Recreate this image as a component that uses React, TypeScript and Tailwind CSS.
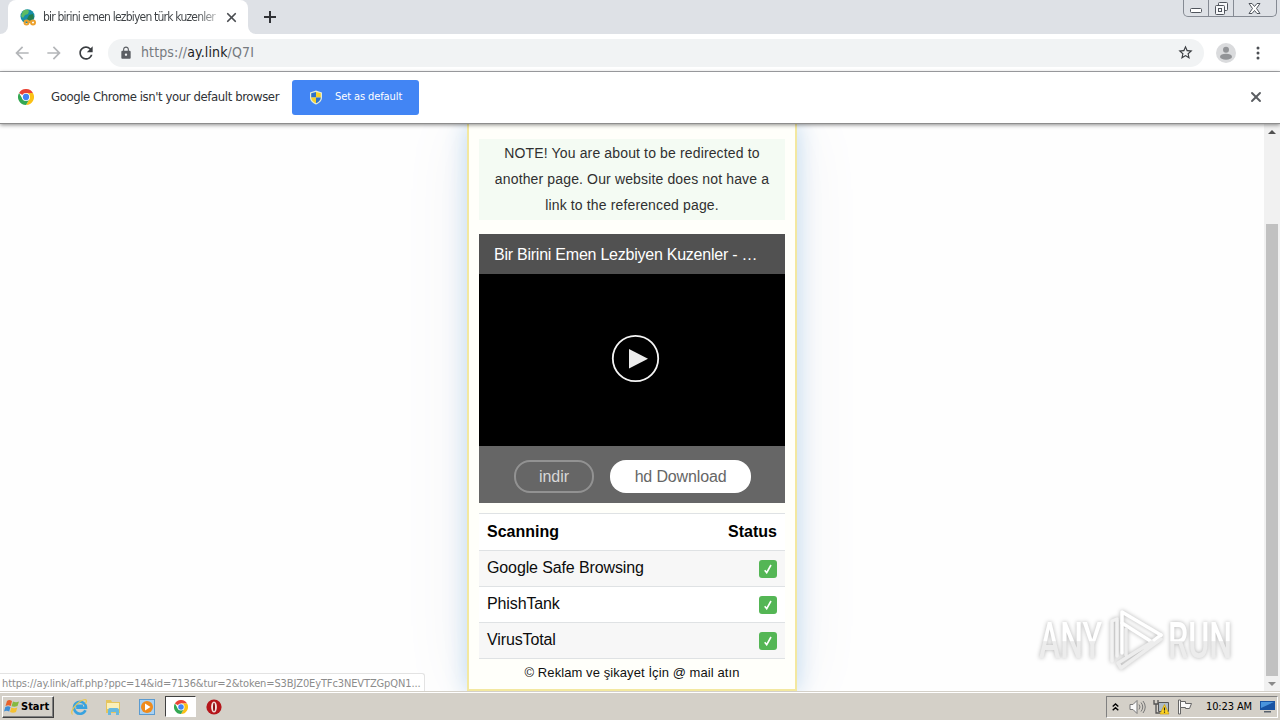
import React from 'react'
import { FiX } from 'react-icons/fi'
import { MdLock, MdRefresh, MdStarBorder, MdArrowBack, MdArrowForward } from 'react-icons/md'

const ChromeLogo: React.FC<{ size: number }> = ({ size }) => (
  <svg width={size} height={size} viewBox="0 0 24 24">
    <circle cx="12" cy="12" r="12" fill="#fff" />
    <path d="M12 12 1.600 6A12 12 0 0 1 22.400 6H12Z" fill="#ea4335" />
    <path d="M12 6h10.400A12 12 0 0 1 12 24l5.200-9Z" fill="#fbc116" />
    <path d="M6.800 15 1.600 6A12 12 0 0 0 12 24l5.200-9Z" fill="#34a853" />
    <circle cx="12" cy="12" r="6" fill="#fff" />
    <circle cx="12" cy="12" r="4.700" fill="#4285f4" />
  </svg>
)

const TabStrip = () => (
  <div className="flex h-[34px] items-start bg-[#dee1e6]">
    <div className="flex h-full w-2 items-end bg-white">
      <div className="h-full w-2 rounded-br-lg bg-[#dee1e6]" />
    </div>
    <div className="flex h-full w-[240px] items-center rounded-t-lg bg-white pl-3">
      <svg width="16" height="17" viewBox="0 0 16 17" className="shrink-0">
        <circle cx="7.500" cy="7.200" r="7" fill="#168ea8" />
        <path d="M3 2c3-2 5-1 6 0L8 5 5 6 3 9 1 7Z" fill="#5dbb63" />
        <path d="m9 6 4-1 1 4-4 3-3-2Z" fill="#247d4c" />
        <g fill="none" stroke="#eda12d" strokeWidth="2">
          <circle cx="6.500" cy="13.500" r="2" />
          <circle cx="13" cy="13.500" r="2" />
          <path d="M8 12.600h4" />
        </g>
      </svg>
      <span className="ml-[7px] w-[174px] bg-gradient-to-r from-[#3c4043] from-88% to-[#3c404350] bg-clip-text text-[12px] tracking-[-0.79px] whitespace-nowrap text-transparent">
        bir birini emen lezbiyen türk kuzenler
      </span>
      <FiX className="ml-[7px] h-[15px] w-[15px] text-[#4a4d51]" strokeWidth={2.8} />
    </div>
    <div className="flex h-full w-2 bg-white">
      <div className="h-full w-2 rounded-bl-lg bg-[#dee1e6]" />
    </div>
    <svg width="12" height="12" viewBox="0 0 12 12" className="mt-[11px] ml-2" stroke="#303236" strokeWidth="2">
      <path d="M6 0v12M0 6h12" />
    </svg>
    <div className="mr-[3px] ml-auto flex h-[17px] w-[94px] rounded-b-[5px] border border-t-0 border-[#858a93] text-[#50555d]">
      <div className="flex w-[25px] items-center justify-center border-r border-[#858a93]">
        <svg width="12" height="5" viewBox="0 0 12 5" className="mt-1">
          <rect x=".5" y=".5" width="11" height="4" rx="1" fill="#fff" stroke="currentColor" />
        </svg>
      </div>
      <div className="flex w-[25px] items-center justify-center border-r border-[#858a93]">
        <svg width="13" height="13" viewBox="0 0 13 13" fill="#f7f8fa" stroke="currentColor">
          <rect x="3.500" y=".5" width="9" height="8" rx="1" />
          <rect x=".5" y="3.500" width="9" height="9" rx="1" />
          <rect x="3.500" y="6.500" width="3" height="3" />
        </svg>
      </div>
      <div className="flex flex-1 items-center justify-center pr-[2px]">
        <svg width="13" height="11" viewBox="0 0 13 11" fill="#fff" stroke="currentColor">
          <path d="M1 .5h3l2.500 3 2.500-3h3L8.500 5.500l3.500 5H9l-2.500-3-2.500 3H1l3.500-5Z" />
        </svg>
      </div>
    </div>
  </div>
)

const Toolbar = () => (
  <div className="flex h-[38px] items-center border-b border-[#a9abae] bg-white pl-[12px]">
    <MdArrowBack className="h-5 w-5 text-[#b4b6b9]" />
    <MdArrowForward className="ml-[12px] h-5 w-5 text-[#b4b6b9]" />
    <MdRefresh className="ml-[12px] h-5 w-5 text-[#3a3d41]" />
    <div className="ml-[12px] flex h-7 w-[1096px] items-center rounded-full bg-[#f1f3f4] pr-[10px] pl-[11px]">
      <MdLock className="h-[14px] w-[14px] text-[#5b5e63]" />
      <span className="ml-2 text-[14px] tracking-[0.13px] text-[#767a7f]">
        https://<span className="text-[#202124]">ay.link</span>/Q7I
      </span>
      <MdStarBorder className="ml-auto h-[17px] w-[17px] text-[#3a3d41]" />
    </div>
    <svg width="20" height="20" viewBox="0 0 20 20" className="ml-[12px]">
      <circle cx="10" cy="10" r="10" fill="#dadbdd" />
      <circle cx="10" cy="6.700" r="3" fill="#929497" />
      <ellipse cx="10" cy="13.700" rx="6" ry="3" fill="#929497" />
    </svg>
    <svg width="4" height="14" viewBox="0 0 4 14" className="ml-[20px]" fill="#4c4f54">
      <circle cx="2" cy="2" r="1.500" />
      <circle cx="2" cy="7" r="1.500" />
      <circle cx="2" cy="12" r="1.500" />
    </svg>
  </div>
)

const DefaultBrowserBar = () => (
  <div className="relative z-10 flex h-[52px] items-center border-b border-[#8d8d8d] bg-white pb-px pl-[18px] shadow-[0_1px_4px_rgba(0,0,0,0.45)]">
    <ChromeLogo size={16} />
    <span className="-mt-px ml-[17px] w-[241px] text-[13px] tracking-[-0.41px] whitespace-nowrap text-[#303236]">
      Google Chrome isn't your default browser
    </span>
    <button className="mt-px flex h-[35px] w-[127px] items-center rounded-[3px] bg-[#4285f4] pl-[17px] text-[11px] tracking-[-0.1px] whitespace-nowrap text-white">
      <svg width="14" height="15" viewBox="0 0 14 15" className="mr-3">
        <path d="M7 .5 13 2.500v5c0 3.500-2.500 5.500-6 7-3.500-1.500-6-3.500-6-7v-5Z" fill="#e4ecd8" />
        <path d="M7 2v5.500H2.200V3.300Z" fill="#2e71c9" />
        <path d="M7 2v5.500h4.800V3.300Z" fill="#f6d22c" />
        <path d="M7 7.500H2.200C2.200 10 4 12 7 13.300Z" fill="#f6d22c" />
        <path d="M7 7.500h4.800c0 2.500-1.800 4.500-4.800 5.800Z" fill="#2e71c9" />
      </svg>
      Set as default
    </button>
    <FiX className="mr-4 ml-auto h-4 w-4 text-[#5a5d61]" strokeWidth={2.8} />
  </div>
)

const scans = ['Google Safe Browsing', 'PhishTank', 'VirusTotal']

const LinkCard = () => (
  <div className="flex h-[567px] w-[330px] flex-col border-x-2 border-b-2 border-[#f3e8a0] bg-[#fffffa] px-[10px] font-['Liberation_Sans',Arial,sans-serif] shadow-[0_0_22px_#bfdaf0,0_0_70px_#f0f0f4]">
    <div className="mt-[15px] h-[81px] bg-[#f4fbf3] px-3 pt-px text-center text-[14px] leading-[26px] tracking-[0.14px] whitespace-nowrap text-[#303030]">
      <p>NOTE! You are about to be redirected to</p>
      <p>another page. Our website does not have a</p>
      <p>link to the referenced page.</p>
    </div>
    <div className="mt-[14px] flex h-10 items-center bg-[#515151] px-[15px] pt-[2px] text-[16px] tracking-[-0.24px] whitespace-nowrap text-white">
      Bir Birini Emen Lezbiyen Kuzenler - …
    </div>
    <div className="flex h-[172px] justify-center bg-black pt-[60px] pl-[7px]">
      <svg width="49" height="49" viewBox="0 0 49 49">
        <circle cx="24.500" cy="24.500" r="22.700" fill="none" stroke="#f4f4f4" strokeWidth="1.800" />
        <path d="M18 15v19.500l19-9.700Z" fill="#ececec" />
      </svg>
    </div>
    <div className="flex h-[57px] items-start justify-center gap-4 bg-[#666] pt-[14px] pl-px text-[16px]">
      <button className="h-[33px] w-20 rounded-2xl border-2 border-[#929292] text-[#d8d8d8]">indir</button>
      <button className="h-[33px] w-[141px] rounded-2xl bg-white tracking-[-0.15px] text-[#666]">hd Download</button>
    </div>
    <div className="mt-[10px] border-y border-[#dfe2e4] text-[16px] tracking-[-0.12px] text-[#0c0c0c]">
      <div className="flex h-9 items-center justify-between bg-white px-2 font-bold tracking-normal text-black">
        <span>Scanning</span>
        <span>Status</span>
      </div>
      {scans.map((name) => (
        <div key={name} className="flex h-9 items-center justify-between border-t border-[#dfe2e4] px-2 odd:bg-white even:bg-[#f7f7f7]">
          <span className="-mt-[2px]">{name}</span>
          <span className="flex h-[18px] w-[18px] items-center justify-center rounded-[3px] bg-[#54b655]">
            <svg width="8" height="10" viewBox="0 0 8 10" fill="none" stroke="#fff" strokeWidth="1.600">
              <path d="M.7 6.200 2.700 8.700 7 1" />
            </svg>
          </span>
        </div>
      ))}
    </div>
    <p className="mt-[4px] text-center text-[13px] leading-5 tracking-[0.08px] text-[#111]">© Reklam ve şikayet İçin @ mail atın</p>
  </div>
)

const Watermark = () => (
  <svg width="204" height="66" viewBox="0 0 204 66" className="absolute top-[483px] left-[1036px] drop-shadow-[0_0_2px_#b4b4b4]">
    <defs>
      <linearGradient id="wm" x1="0" y1="0" x2="0" y2="1">
        <stop offset="50%" stopColor="#fff" />
        <stop offset="51%" stopColor="#ececec" />
      </linearGradient>
    </defs>
    <g fill="url(#wm)" fontFamily="Roboto, sans-serif" fontWeight="500" fontSize="50">
      <text x="3" y="51" textLength="63" lengthAdjust="spacingAndGlyphs">ANY</text>
      <text x="132" y="51" textLength="64" lengthAdjust="spacingAndGlyphs">RUN</text>
    </g>
    <g fill="none" strokeWidth="3.500" strokeLinejoin="round" strokeLinecap="round">
      <path d="M76 54V14l5-2M81 49V13" stroke="#f2f2f2" />
      <path d="M86 46V5l39 23" stroke="#fff" />
      <path d="M86 16l30 19 9-7" stroke="#fff" />
      <path d="M125 32 85 61l-3-5 34-21M90 48V22" stroke="#ededed" />
    </g>
  </svg>
)

const ScrollBar = () => (
  <div className="flex w-4 flex-col items-center bg-[#f1f1f1]">
    <svg width="8" height="4" viewBox="0 0 8 4" className="mt-[6px]" fill="#505050">
      <path d="M4 0l4 4H0Z" />
    </svg>
    <div className="mt-[90px] h-[452px] w-3 bg-[#c1c1c1]" />
    <svg width="8" height="4" viewBox="0 0 8 4" className="mt-[6px]" fill="#8a8a8a">
      <path d="M0 0h8L4 4Z" />
    </svg>
  </div>
)

const Taskbar = () => (
  <div className="flex h-[29px] items-center border-t border-[#d4d0c8] bg-[#d4d0c8] pt-px shadow-[inset_0_1px_0_#fff]">
    <button className="ml-[2px] flex h-[22px] w-[52px] shrink-0 items-center border border-t-white border-r-[#404040] border-b-[#404040] border-l-white pl-px text-[11px] font-bold text-black shadow-[inset_-1px_-1px_0_#808080]">
      <svg width="16" height="15" viewBox="0 0 16 15" className="shrink-0">
        <path d="M3 2c2-1.500 3-1 5 0L6.800 7C5 6 3.500 6 1.500 7Z" fill="#e8622c" />
        <path d="M9 2.500c2 1 4 1 6 0L13.500 7c-2 1-4 1-6 .3Z" fill="#86b940" />
        <path d="M1.300 8c2-1 3.500-1 5.200 0L5.200 12.500c-2-1-3.500-1-5.200 0Z" fill="#3f8ed6" />
        <path d="M7.300 8.500c2 1 4 1 6 0L12 13c-2 1-4 1-6 0Z" fill="#f5c132" />
      </svg>
      <span className="mt-px ml-px">Start</span>
    </button>
    <svg width="18" height="18" viewBox="0 0 18 18" className="ml-[16px]" fill="none">
      <path
        d="M15.500 12.200A6 6 0 1 1 16 9.700H6.200M6 7.700h7"
        stroke="#38a2df"
        strokeWidth="2.600"
      />
      <path d="M2.500 16.500C-1 14 7 4 13 2c4-1.500 4 1 2.500 3.500" stroke="#e8c751" strokeWidth="1.300" />
    </svg>
    <svg width="18" height="18" viewBox="0 0 18 18" className="ml-[16px]">
      <path d="M2 2h5l1 2h8v11H2Z" fill="#e6c55d" />
      <path d="M3 5h12v6H3Z" fill="#fbefb8" />
      <path d="M4 17v-4q0-3 2-3h7q2 0 2 3v4h-3v-3H7v3Z" fill="#67b9df" />
    </svg>
    <svg width="16" height="16" viewBox="0 0 16 16" className="ml-[17px]">
      <rect x=".5" y=".5" width="15" height="15" fill="#a8d1f3" stroke="#5b9bd0" />
      <circle cx="8" cy="8" r="6" fill="#ef8b1c" />
      <path d="M6 4.500v7L11.500 8Z" fill="#fff" />
    </svg>
    <div className="ml-[10px] flex h-[21px] w-[31px] items-center justify-center border border-t-[#404040] border-r-white border-b-white border-l-[#404040] bg-white">
      <ChromeLogo size={14} />
    </div>
    <svg width="16" height="16" viewBox="0 0 16 16" className="ml-[10px]">
      <circle cx="8" cy="8" r="7.600" fill="#b5161b" />
      <ellipse cx="8" cy="8" rx="2.900" ry="5.500" fill="#f4e6e3" />
      <ellipse cx="8" cy="8" rx="1" ry="4.300" fill="#8a0d12" />
    </svg>
    <div className="mr-[2px] ml-auto flex h-[22px] w-[172px] items-center border border-t-[#808080] border-r-white border-b-white border-l-[#808080] text-[11px] text-black">
      <svg width="7" height="8" viewBox="0 0 7 8" className="ml-[5px]" fill="none" stroke="#000" strokeWidth="1.400">
        <path d="M.7 3.500 3.500 1l2.800 2.500M.7 7.300l2.800-2.500 2.800 2.500" />
      </svg>
      <svg width="17" height="16" viewBox="0 0 17 16" className="ml-[10px]" stroke="#777" fill="none">
        <path d="M1 5.500h3L8 1.500v13l-4-4H1Z" fill="#f9f9f9" />
        <path d="M10 5.500q2 2.500 0 5M12 3.500q3.500 4.500 0 9M14 2q4.500 6 0 12" />
      </svg>
      <svg width="17" height="16" viewBox="0 0 17 16" className="ml-[7px]">
        <path d="M5.500 3.500h10v9h-10Z" fill="#aebbc5" stroke="#555" />
        <path d="M1 1v4h4V1M3 5v9h4" fill="none" stroke="#555" strokeWidth="1.300" />
        <path d="m11.500 5.500 4.500 9.500H7Z" fill="#ffd522" stroke="#c99b0a" strokeWidth=".7" />
        <path d="M11.500 8.500v3M11.500 12.500v1.300" stroke="#222" strokeWidth="1.200" />
      </svg>
      <svg width="16" height="16" viewBox="0 0 16 16" className="ml-[7px]" fill="#fafafa" stroke="#666">
        <path d="M1.500 1v14h2V1Z" />
        <path d="M3.500 2.500h5v2h6l-2 5h-4v-1h-5Z" />
      </svg>
      <span className="mt-[2px] ml-[13px] w-[49px] tracking-[-0.12px] whitespace-nowrap">10:23 AM</span>
      <svg width="15" height="13" viewBox="0 0 15 13" className="ml-[5px]">
        <path d="M0 1h15v9H0Z" fill="#1853a3" />
        <path d="M1 2h13L1 8Z" fill="#4a94dc" />
        <path d="M4 11h7v1.500H4Z" fill="#58616c" />
      </svg>
    </div>
  </div>
)

export default function App() {
  return (
    <div className="flex h-[720px] w-[1280px] flex-col overflow-hidden bg-white font-['DejaVu_Sans_Condensed','Noto_Sans',sans-serif]">
      <TabStrip />
      <Toolbar />
      <DefaultBrowserBar />
      <main className="relative flex h-[567px] overflow-hidden bg-[#fefefe]">
        <div className="flex flex-1 items-start pl-[467px]">
          <LinkCard />
        </div>
        <ScrollBar />
        <Watermark />
        {/* Hovered link address */}
        <div className="absolute bottom-0 left-0 h-[18px] w-[425px] rounded-tr-[3px] border-t border-r border-[#e3e3e3] bg-white pl-[2px] text-[11px] leading-[19px] tracking-[-0.12px] whitespace-nowrap text-[#8c8c8c]">
          https://ay.link/aff.php?ppc=14&amp;id=7136&amp;tur=2&amp;token=S3BJZ0EyTFc3NEVTZGpQN1...
        </div>
      </main>
      <Taskbar />
    </div>
  )
}
